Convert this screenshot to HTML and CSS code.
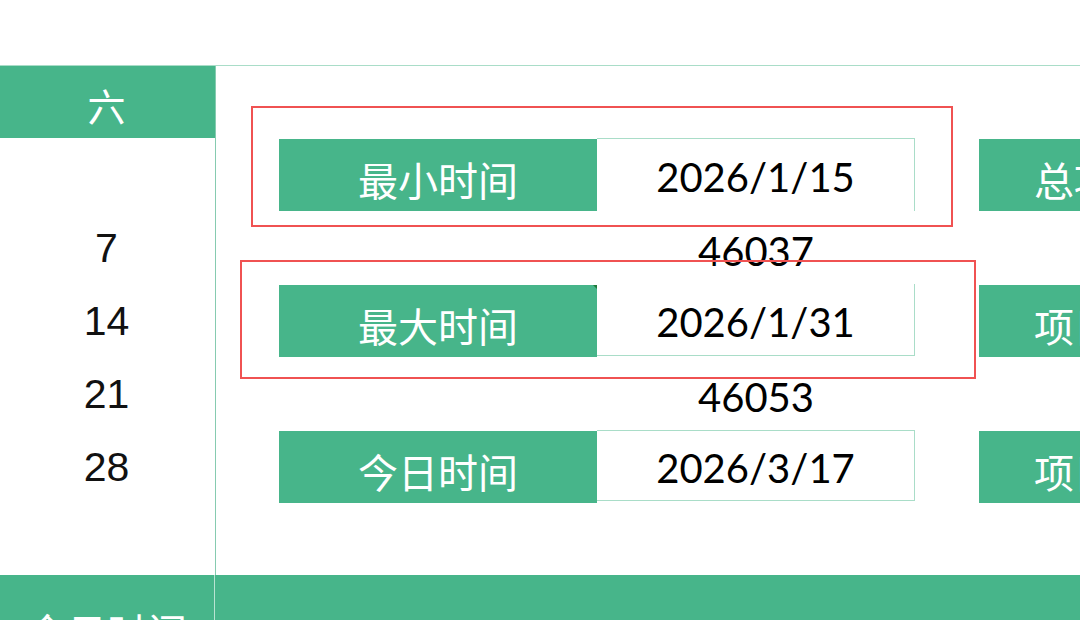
FILE: index.html
```html
<!DOCTYPE html>
<html lang="zh-CN">
<head>
<meta charset="utf-8">
<title>时间统计</title>
<link rel="stylesheet" href="styles.css">
</head>
<body>
<div class="page">
  <div class="top"></div>
  <div class="sheet">
    <div class="left">
      <div class="lhdr">六</div>
      <div class="lrow"></div>
      <div class="lrow">7</div>
      <div class="lrow">14</div>
      <div class="lrow">21</div>
      <div class="lrow">28</div>
      <div class="lrow last"></div>
    </div>
    <div class="right">
      <div class="r-hdr"></div>

      <div class="blank"></div>
      <div class="label">最小时间</div>
      <div class="value v1">2026/1/15</div>
      <div class="blank"></div>
      <div class="label side">总项目数量</div>

      <div class="blank"></div>
      <div class="blank"></div>
      <div class="serial">46037</div>
      <div class="blank"></div>
      <div class="blank"></div>

      <div class="blank"></div>
      <div class="label mark">最大时间</div>
      <div class="value v2">2026/1/31</div>
      <div class="blank"></div>
      <div class="label side">项目进行中</div>

      <div class="blank"></div>
      <div class="blank"></div>
      <div class="serial">46053</div>
      <div class="blank"></div>
      <div class="blank"></div>

      <div class="blank"></div>
      <div class="label">今日时间</div>
      <div class="value v3">2026/3/17</div>
      <div class="blank"></div>
      <div class="label side">项目完成</div>
    </div>
  </div>
  <div class="bottom">
    <div class="bleft">今日时间</div>
    <div class="bright"></div>
  </div>
  <div class="redbox rb1"></div>
  <div class="redbox rb2"></div>
</div>
</body>
</html>
```
FILE: styles.css
```css
* { box-sizing: border-box; }
html, body {
  margin: 0;
  padding: 0;
  background: #ffffff;
  overflow: hidden;
}
.page {
  position: relative;
  width: 1080px;
  height: 620px;
  overflow: hidden;
  font-family: "Noto Sans CJK SC", "Noto Sans", sans-serif;
}
.top { height: 65px; }
.sheet {
  display: flex;
  border-top: 1px solid #a9ddc8;
  width: 1500px;
}
.left {
  width: 216px;
  flex: none;
  border-right: 1px solid #86cbb0;
  display: flex;
  flex-direction: column;
}
.lhdr {
  height: 72px;
  background: #47b58a;
  color: #ffffff;
  font-size: 38px;
  line-height: 1;
  display: flex;
  align-items: center;
  justify-content: center;
  padding-top: 6px;
  padding-right: 2px;
}
.lrow {
  height: 73px;
  display: flex;
  align-items: center;
  justify-content: center;
  font-family: "Liberation Sans", Arial, sans-serif;
  font-size: 41px;
  color: #111111;
  padding-top: 2px;
  padding-right: 2px;
}
.lrow.last { height: 72px; }
.right {
  display: grid;
  grid-template-columns: 63px 318px 318px 64px 318px;
  grid-template-rows: 72px 73px 73px 73px 73px 73px 72px;
}
.r-hdr { grid-column: 1 / -1; }
.label {
  background: #47b58a;
  color: #ffffff;
  font-size: 40px;
  line-height: 1;
  display: flex;
  align-items: center;
  justify-content: center;
  padding-top: 8px;
  margin-top: 1px;
}
.label.mark { position: relative; }
.label.mark::after {
  content: "";
  position: absolute;
  top: 0;
  right: 0;
  border-top: 4px solid #1f7a3a;
  border-left: 4px solid transparent;
}
.side {
  justify-content: flex-start;
  padding-left: 55px;
}
.value, .serial {
  font-family: "Lato", "Liberation Sans", sans-serif;
  font-size: 40px;
  color: #000000;
  display: flex;
  align-items: center;
  justify-content: center;
  line-height: 1;
  padding-top: 4px;
}
.value { border-right: 1px solid #a9ddc8; }
.v1 { border-top: 1px solid #a9ddc8; }
.v2 { border-bottom: 1px solid #a9ddc8; margin-bottom: 1px; }
.v3 { border-top: 1px solid #a9ddc8; border-bottom: 1px solid #a9ddc8; margin-bottom: 2px; }
.serial { padding-top: 6px; }
.bottom {
  display: flex;
  height: 45px;
  background: #47b58a;
}
.bleft {
  width: 215px;
  flex: none;
  border-right: 1px solid #b9e3d2;
  color: #ffffff;
  font-size: 40px;
  line-height: 40px;
  text-align: center;
  padding-top: 36px;
  white-space: nowrap;
  overflow: hidden;
}
.bright { flex: 1; }
.redbox {
  position: absolute;
  border: 2px solid #f05252;
}
.rb1 { left: 251px; top: 106px; width: 702px; height: 121px; }
.rb2 { left: 240px; top: 260px; width: 736px; height: 119px; }
```
